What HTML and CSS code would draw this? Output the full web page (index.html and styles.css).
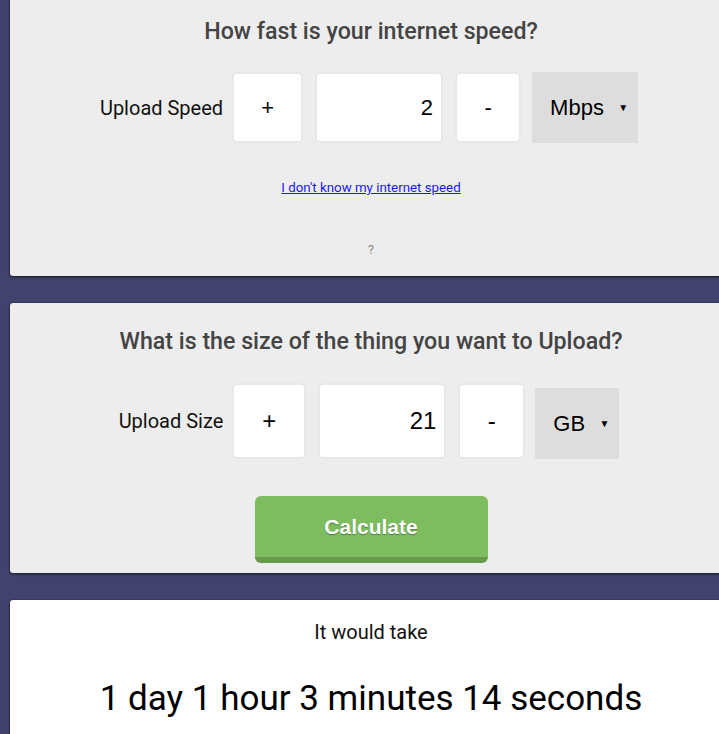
FILE: index.html
```html
<!DOCTYPE html>
<html lang="en">
<head>
<meta charset="utf-8">
<title>Upload time calculator</title>
<link rel="stylesheet" href="styles.css">
</head>
<body>
<main class="page">
  <section class="card card-speed">
    <h2 class="card-title">How fast is your internet speed?</h2>
    <div class="field-row row-speed">
      <label class="field-label">Upload Speed</label>
      <button class="step step-plus">+</button>
      <input class="value-input" type="text" value="2">
      <button class="step step-minus">-</button>
      <div class="unit-select"><span class="unit-text">Mbps</span><span class="caret">▼</span></div>
    </div>
    <a class="help-link" href="#">I don't know my internet speed</a>
    <div class="question">?</div>
  </section>

  <section class="card card-size">
    <h2 class="card-title">What is the size of the thing you want to Upload?</h2>
    <div class="field-row row-size">
      <label class="field-label">Upload Size</label>
      <button class="step step-plus">+</button>
      <input class="value-input" type="text" value="21">
      <button class="step step-minus">-</button>
      <div class="unit-select"><span class="unit-text">GB</span><span class="caret">▼</span></div>
    </div>
    <button class="calc-btn">Calculate</button>
  </section>

  <section class="card card-result">
    <p class="result-lead">It would take</p>
    <p class="result-value">1 day 1 hour 3 minutes 14 seconds</p>
  </section>
</main>
</body>
</html>
```
FILE: styles.css
```css
html, body {
  margin: 0;
  padding: 0;
  background: #41426e;
  overflow: hidden;
  height: 100%;
}

.page {
  display: flex;
  flex-direction: column;
  gap: 27px;
  margin-top: -10px;
  margin-left: 10px;
  width: 722px;
}

.card {
  background: #ededed;
  border-radius: 3px;
  box-shadow: 0 1px 3px rgba(0, 0, 0, 0.65), 0 0 1px rgba(0, 0, 0, 0.5);
  display: flex;
  flex-direction: column;
  align-items: center;
}

.card-title {
  margin: 0;
  font-family: Roboto, "Noto Sans", sans-serif;
  font-weight: 500;
  font-size: 23.2px;
  line-height: 28px;
  color: #444;
  text-align: center;
}

.card-speed {
  padding: 27px 0 19px;
}

.card-size {
  padding: 24px 0 10px;
}

.field-row {
  display: flex;
  align-items: center;
  margin-left: -4px;
}

.row-speed {
  margin-top: 27px;
}

.row-size {
  margin-top: 28px;
}

.field-label {
  font-family: Roboto, "Noto Sans", sans-serif;
  font-size: 20px;
  color: #111;
  margin-right: 11px;
}

.step, .value-input {
  box-sizing: border-box;
  background: #fff;
  border: none;
  border-radius: 3px;
  box-shadow: 0 0 1px 2px rgba(0, 0, 0, 0.025);
  font-family: "Liberation Sans", Arial, sans-serif;
  color: #000;
  padding: 0;
  margin: 0;
}

.step {
  text-align: center;
  font-size: 22px;
}

.value-input {
  text-align: right;
  padding-right: 8px;
  width: 124px;
  margin: 0 16px;
  outline: none;
}

.row-speed .step, .row-speed .value-input {
  height: 67px;
  font-size: 22px;
}

.row-speed .step-plus { width: 67px; }
.row-speed .step-minus { width: 62px; margin-right: 13px; }

.row-size .step, .row-size .value-input {
  height: 72px;
  font-size: 24px;
}

.row-size .step-plus { width: 70px; }
.row-size .step-minus { width: 63px; margin-right: 12px; }

.unit-select {
  box-sizing: border-box;
  display: flex;
  align-items: center;
  justify-content: space-between;
  height: 71px;
  background: #dddddd;
  padding: 0 10px 0 18px;
  font-family: "Liberation Sans", Arial, sans-serif;
  font-size: 22px;
  color: #000;
}

.row-speed .unit-select { width: 106px; }
.row-size .unit-select { width: 84px; margin-top: 5px; }

.caret {
  font-size: 10px;
}

.help-link {
  margin-top: 37px;
  font-family: Roboto, "Noto Sans", sans-serif;
  font-size: 13.3px;
  line-height: 16px;
  color: #1a1aee;
  text-decoration: underline;
}

.question {
  margin-top: 46px;
  font-family: Roboto, "Noto Sans", sans-serif;
  font-size: 12.5px;
  line-height: 15px;
  color: #888;
}

.calc-btn {
  margin-top: 37px;
  width: 233px;
  height: 67px;
  box-sizing: border-box;
  background: #7dbd60;
  border: none;
  border-bottom: 6px solid #669a4c;
  border-radius: 6px;
  color: #fff;
  font-family: "Liberation Sans", Arial, sans-serif;
  font-weight: bold;
  font-size: 21px;
  text-shadow: 0 1px 1px rgba(0, 0, 0, 0.35);
  padding: 0;
}

.card-result {
  background: #fff;
  padding: 20px 0 40px;
}

.result-lead {
  margin: 0;
  font-family: Roboto, "Noto Sans", sans-serif;
  font-size: 20px;
  line-height: 24px;
  color: #111;
}

.result-value {
  margin: 35px 0 0;
  font-family: Roboto, "Noto Sans", sans-serif;
  font-size: 35px;
  line-height: 40px;
  color: #000;
}
```
